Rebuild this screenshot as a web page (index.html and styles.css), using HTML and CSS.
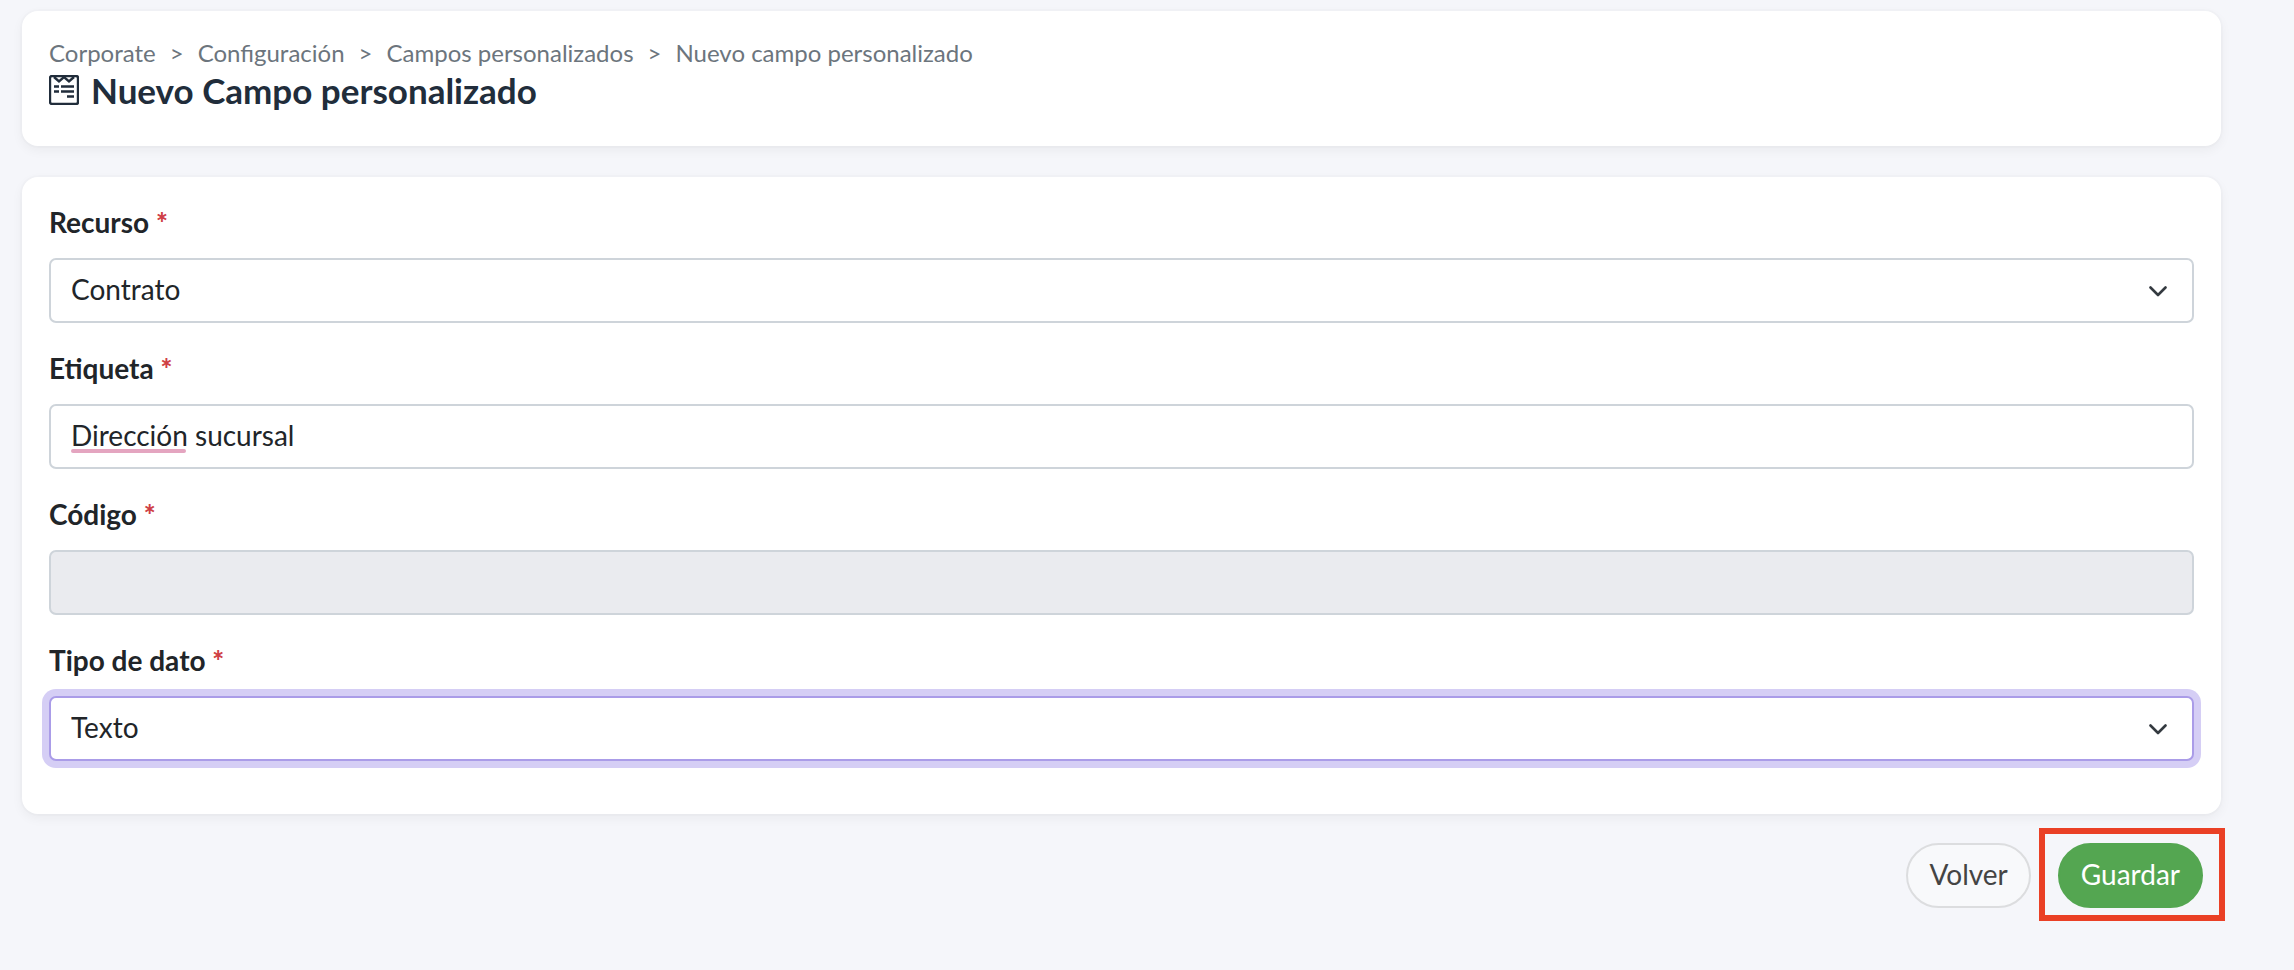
FILE: index.html
```html
<!DOCTYPE html>
<html lang="es">
	<head>
		<meta charset="utf-8" />
		<meta name="viewport" content="width=device-width, initial-scale=1" />
		<title>Nuevo Campo personalizado</title>
		<link rel="stylesheet" href="styles.css">
	</head>
	<body>
		<header class="card header">
			<nav class="breadcrumb">
				<a href="#">Corporate</a>
				<span>&gt;</span>
				<a href="#">Configuración</a>
				<span>&gt;</span>
				<a href="#">Campos personalizados</a>
				<span>&gt;</span>
				<a href="#">Nuevo campo personalizado</a>
			</nav>
			<h1 class="title">
				<svg class="title-icon" viewBox="0 0 30 30" aria-hidden="true">
					<rect x="1" y="1" width="28" height="28" rx="2" />
					<path d="M5 2l5 4.5L15 2l5 4.5L25 2" />
					<path d="M5 11.5h5M12 11.5h13M5 16.5h5M12 16.5h13M18 21.5h7" />
				</svg>
				Nuevo Campo personalizado
			</h1>
		</header>

		<form id="myForm">
			<div class="card fields">
				<div class="field">
					<label for="recurso">Recurso <span class="required">*</span></label>
					<div class="control">
						<select id="recurso" name="recurso">
							<option selected>Contrato</option>
						</select>
						<svg class="chevron" viewBox="0 0 18 12" aria-hidden="true"><path d="M1.5 1.5L9 9l7.5-7.5" /></svg>
					</div>
				</div>
				<div class="field">
					<label for="etiqueta">Etiqueta <span class="required">*</span></label>
					<div class="control">
						<input type="text" id="etiqueta" name="etiqueta" value="Dirección sucursal" spellcheck="false" />
						<span class="spelling"></span>
					</div>
				</div>
				<div class="field">
					<label for="codigo">Código <span class="required">*</span></label>
					<div class="control">
						<input type="text" id="codigo" name="codigo" disabled />
					</div>
				</div>
				<div class="field">
					<label for="tipo">Tipo de dato <span class="required">*</span></label>
					<div class="control">
						<select class="active" id="tipo" name="tipo">
							<option selected>Texto</option>
						</select>
						<svg class="chevron" viewBox="0 0 18 12" aria-hidden="true"><path d="M1.5 1.5L9 9l7.5-7.5" /></svg>
					</div>
				</div>
			</div>
			<div class="actions">
				<button type="button" class="btn">Volver</button>
				<div class="highlight">
					<button type="submit" class="btn save">Guardar</button>
				</div>
			</div>
		</form>
	</body>
</html>
```

FILE: styles.css
```css
* {
	box-sizing: border-box;
}
body {
	margin: 0;
	padding: 11px 73px 24px 22px;
	background-color: #f5f6fa;
	color: #212529;
	font-family: Lato, "Open Sans", sans-serif;
	font-size: 28px;
	line-height: 36px;
}
.card {
	background-color: #fff;
	border-radius: 16px;
	box-shadow: 0 0 0 2px rgba(0, 0, 0, 0.01), 0 4px 12px rgba(0, 0, 0, 0.05);
}
.header {
	padding: 24px 27px 37px;
	margin-bottom: 31px;
}
.breadcrumb {
	display: flex;
	flex-wrap: wrap;
	gap: 14px;
	color: #6c757d;
	font-size: 24px;
	line-height: 36px;
}
.breadcrumb a {
	color: inherit;
	text-decoration: none;
}
.title {
	display: flex;
	align-items: center;
	gap: 12px;
	margin: 0;
	color: #212d3b;
	font-size: 35px;
	font-weight: bold;
	line-height: 38px;
}
.title-icon {
	width: 30px;
	height: 30px;
	fill: none;
	stroke: currentColor;
	stroke-width: 2.4;
}
.fields {
	padding: 27px 27px 53px;
	display: grid;
	gap: 27px;
}
.field label {
	display: block;
	margin-bottom: 18px;
	font-weight: bold;
}
.required {
	color: #cf4045;
	font-weight: 900;
}
.control {
	position: relative;
}
.control select,
.control input {
	display: block;
	width: 100%;
	height: 65px;
	padding: 0 20px 4px;
	border: 2px solid #ced4da;
	border-radius: 7px;
	background-color: #fff;
	color: #212529;
	font: inherit;
	appearance: none;
	outline: none;
}
.control input:disabled {
	background-color: #eaebef;
}
.control select.active {
	border-color: #aa9ce8;
	box-shadow: 0 0 0 7px #d5cef5;
}
.chevron {
	position: absolute;
	right: 27px;
	top: 28px;
	width: 18px;
	height: 12px;
	fill: none;
	stroke: #343a40;
	stroke-width: 2.6;
	stroke-linecap: round;
	stroke-linejoin: round;
	pointer-events: none;
}
/* spell checker mark under the first word */
.spelling {
	position: absolute;
	left: 22px;
	bottom: 16px;
	width: 115px;
	height: 4px;
	border-radius: 2px;
	background-color: #e4a5c0;
}
.actions {
	display: flex;
	justify-content: flex-end;
	gap: 27px;
	padding: 29px 18px 0 0;
}
.btn {
	display: block;
	height: 65px;
	padding: 0 21px 4px;
	border: 2px solid #dcdddf;
	border-radius: 33px;
	background-color: #f8f9fb;
	color: #444;
	font: inherit;
	cursor: pointer;
}
.save {
	border-color: #54a651;
	background-color: #54a651;
	color: #fff;
}
.highlight {
	position: relative;
}
.highlight::after {
	content: "";
	position: absolute;
	inset: -15px -22px -13px -19px;
	border: 6px solid #ea4025;
	pointer-events: none;
}
```
